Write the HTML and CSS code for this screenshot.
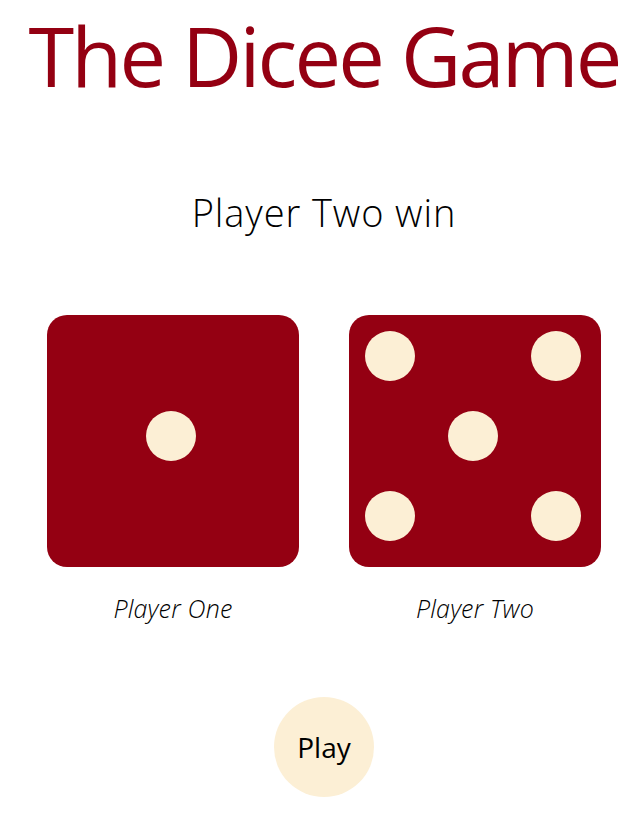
FILE: index.html
```html
<!DOCTYPE html>
<html lang="en">
<head>
<meta charset="utf-8">
<title>Dicee</title>
<link rel="stylesheet" href="styles.css">
</head>
<body>
  <div class="container">
    <h1 class="title">The Dicee Game</h1>
    <p class="result">Player Two win</p>
    <div class="dice-row">
      <div class="player">
        <div class="die">
          <span class="dot c2 r2"></span>
        </div>
        <p class="label">Player One</p>
      </div>
      <div class="player">
        <div class="die">
          <span class="dot c1 r1"></span>
          <span class="dot c3 r1"></span>
          <span class="dot c2 r2"></span>
          <span class="dot c1 r3"></span>
          <span class="dot c3 r3"></span>
        </div>
        <p class="label">Player Two</p>
      </div>
    </div>
    <div class="actions">
      <button class="play-btn" type="button">Play</button>
    </div>
  </div>
</body>
</html>
```
FILE: styles.css
```css
html, body {
  margin: 0;
  padding: 0;
  background: #ffffff;
}

body {
  font-family: "Open Sans", "Noto Sans", sans-serif;
  color: #000;
}

.container {
  padding-left: 4px;
  text-align: center;
}

.title {
  margin: 5px 0 0;
  font-size: 83px;
  line-height: 100px;
  font-weight: 400;
  letter-spacing: -2.8px;
  color: #940012;
}

.result {
  margin: 88px 0 0;
  font-size: 38px;
  line-height: 38px;
  font-weight: 300;
  letter-spacing: 0.9px;
}

.dice-row {
  margin-top: 84px;
  display: flex;
  justify-content: center;
  gap: 50px;
}

.player {
  display: flex;
  flex-direction: column;
  align-items: center;
}

.die {
  width: 252px;
  height: 252px;
  box-sizing: border-box;
  background: #940012;
  border-radius: 20px;
  padding: 16px 0 0 16px;
  display: grid;
  grid-template-columns: 50px 50px 50px;
  grid-template-rows: 50px 50px 50px;
  column-gap: 33px;
  row-gap: 30px;
  align-content: start;
  justify-content: start;
}

.dot {
  width: 50px;
  height: 50px;
  border-radius: 50%;
  background: #fcefd5;
}

.c1 { grid-column: 1; }
.c2 { grid-column: 2; }
.c3 { grid-column: 3; }
.r1 { grid-row: 1; }
.r2 { grid-row: 2; }
.r3 { grid-row: 3; }

.label {
  margin: 29px 0 0;
  font-size: 25px;
  line-height: 25px;
  font-style: italic;
  font-weight: 300;
  letter-spacing: 0.2px;
}

.actions {
  margin-top: 76px;
  display: flex;
  justify-content: center;
}

.play-btn {
  width: 100px;
  height: 100px;
  border: none;
  border-radius: 50%;
  background: #fcefd5;
  font-family: "Open Sans", "Noto Sans", sans-serif;
  font-size: 28px;
  line-height: 28px;
  font-weight: 400;
  color: #000;
  padding: 0;
  display: flex;
  align-items: center;
  justify-content: center;
}
```
